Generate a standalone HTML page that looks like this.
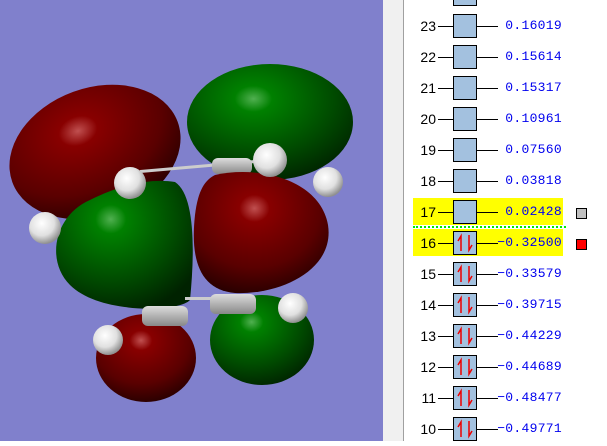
<!DOCTYPE html>
<html><head><style>
body{margin:0;width:607px;height:441px;overflow:hidden;position:relative;background:#fff;font-family:"Liberation Sans",sans-serif}
#l{position:absolute;left:0;top:0;width:383px;height:441px;background:#8080cc}
#g{position:absolute;left:383px;top:0;width:20px;height:441px;background:#f0f0f0;border-right:1px solid #a0a0a0}
.r{position:absolute;left:404px;width:203px;height:31px}
.n{position:absolute;left:8px;top:7px;width:24px;text-align:right;font-size:14px;color:#000}
.ln{position:absolute;left:34px;top:15px;width:60px;height:1px;background:#000}
.b{position:absolute;left:49px;top:3px;width:22px;height:22px;background:#a3c1df;border:1px solid #000}
.v{position:absolute;right:45px;top:7px;font-family:"Liberation Mono",monospace;font-size:13px;letter-spacing:0.3px;color:#0000ee}
.hl{position:absolute;left:9px;top:1px;width:150px;height:27px;background:#ffff00}
.sq{position:absolute;left:172px;top:11px;width:9px;height:9px;border:1px solid #000}
</style></head><body>
<div id="l">
<svg width="383" height="441">
<defs>
<radialGradient id="rd" cx="0.45" cy="0.3" r="0.75"><stop offset="0" stop-color="#c05050"/><stop offset="0.15" stop-color="#880000"/><stop offset="0.65" stop-color="#5a0000"/><stop offset="1" stop-color="#220000"/></radialGradient>
<radialGradient id="gr" cx="0.4" cy="0.3" r="0.75"><stop offset="0" stop-color="#50b050"/><stop offset="0.15" stop-color="#008000"/><stop offset="0.65" stop-color="#004a00"/><stop offset="1" stop-color="#002200"/></radialGradient>
<radialGradient id="h" cx="0.4" cy="0.35" r="0.65"><stop offset="0" stop-color="#fff"/><stop offset="0.6" stop-color="#e0e0e0"/><stop offset="1" stop-color="#909090"/></radialGradient>
<linearGradient id="c" x1="0" y1="0" x2="0" y2="1"><stop offset="0" stop-color="#ddd"/><stop offset="1" stop-color="#888"/></linearGradient>
</defs>
<ellipse cx="270" cy="122" rx="83" ry="58" fill="url(#gr)"/>
<ellipse cx="95" cy="152" rx="88" ry="64" transform="rotate(-20 95 152)" fill="url(#rd)"/>
<rect x="140" y="170" width="140" height="3" fill="#ccc" transform="rotate(-5 140 170)"/>
<rect x="212" y="158" width="40" height="16" rx="6" fill="url(#c)"/>
<path d="M175 182 C195 195 195 250 190 300 C180 312 100 315 70 285 C45 260 55 215 90 200 C120 185 150 178 175 182Z" fill="url(#gr)"/>
<path d="M215 175 C260 165 320 180 328 225 C335 270 280 295 235 293 C200 290 190 260 195 215 C198 190 205 180 215 175Z" fill="url(#rd)"/>
<rect x="185" y="297" width="30" height="3" fill="#ccc"/>
<ellipse cx="146" cy="358" rx="50" ry="44" fill="url(#rd)"/>
<ellipse cx="262" cy="340" rx="52" ry="45" fill="url(#gr)"/>
<rect x="142" y="306" width="46" height="20" rx="6" fill="url(#c)"/>
<rect x="210" y="294" width="46" height="20" rx="6" fill="url(#c)"/>
<circle cx="130" cy="183" r="16" fill="url(#h)"/>
<circle cx="270" cy="160" r="17" fill="url(#h)"/>
<circle cx="328" cy="182" r="15" fill="url(#h)"/>
<circle cx="45" cy="228" r="16" fill="url(#h)"/>
<circle cx="108" cy="340" r="15" fill="url(#h)"/>
<circle cx="293" cy="308" r="15" fill="url(#h)"/>
</svg>
</div>
<div id="g"></div>

<div class="r" style="top:-21px"><div class="b"></div></div>
<div class="r" style="top:11px"><div class="n">23</div><div class="ln"></div><div class="b"></div><div class="v">0.16019</div></div>
<div class="r" style="top:42px"><div class="n">22</div><div class="ln"></div><div class="b"></div><div class="v">0.15614</div></div>
<div class="r" style="top:73px"><div class="n">21</div><div class="ln"></div><div class="b"></div><div class="v">0.15317</div></div>
<div class="r" style="top:104px"><div class="n">20</div><div class="ln"></div><div class="b"></div><div class="v">0.10961</div></div>
<div class="r" style="top:135px"><div class="n">19</div><div class="ln"></div><div class="b"></div><div class="v">0.07560</div></div>
<div class="r" style="top:166px"><div class="n">18</div><div class="ln"></div><div class="b"></div><div class="v">0.03818</div></div>
<div class="r" style="top:197px"><div class="hl"></div><div class="n">17</div><div class="ln"></div><div class="b"></div><div class="v">0.02428</div><div class="sq" style="background:#c0c0c0"></div></div>
<div style="position:absolute;left:413px;top:226px;width:153px;border-top:2px dotted #00ee00"></div>
<div class="r" style="top:228px"><div class="hl"></div><div class="n">16</div><div class="ln"></div><div class="b">E</div><div class="v">−0.32500</div><div class="sq" style="background:#ff0000"></div></div>
<div class="r" style="top:259px"><div class="n">15</div><div class="ln"></div><div class="b">E</div><div class="v">−0.33579</div></div>
<div class="r" style="top:290px"><div class="n">14</div><div class="ln"></div><div class="b">E</div><div class="v">−0.39715</div></div>
<div class="r" style="top:321px"><div class="n">13</div><div class="ln"></div><div class="b">E</div><div class="v">−0.44229</div></div>
<div class="r" style="top:352px"><div class="n">12</div><div class="ln"></div><div class="b">E</div><div class="v">−0.44689</div></div>
<div class="r" style="top:383px"><div class="n">11</div><div class="ln"></div><div class="b">E</div><div class="v">−0.48477</div></div>
<div class="r" style="top:414px"><div class="n">10</div><div class="ln"></div><div class="b">E</div><div class="v">−0.49771</div></div>
<script>
document.querySelectorAll('.b').forEach(function(b){if(b.textContent==='E'){b.innerHTML='<svg width="22" height="22"><path d="M7 19V4L4 9" stroke="#e00" stroke-width="1.5" fill="none"/><path d="M15 3V18L18 13" stroke="#e00" stroke-width="1.5" fill="none"/></svg>';}});
</script>
</body></html>
